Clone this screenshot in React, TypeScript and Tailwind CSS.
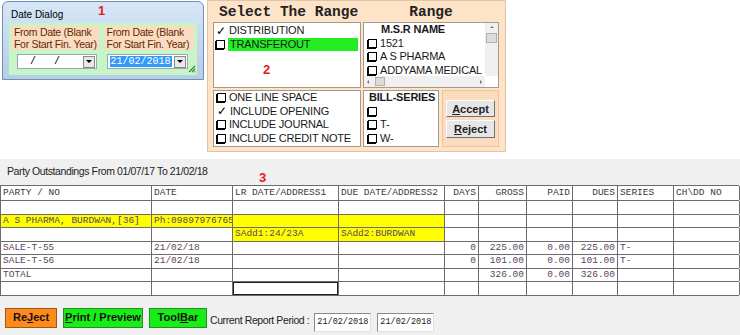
import React from "react";

const cols = ["w-[151px]", "w-[81px]", "w-[106px]", "w-[106px]", "w-[34px]", "w-[48px]", "w-[46px]", "w-[45px]", "w-[56px]", "w-[66px]"];
const right = [false, false, false, false, true, true, true, true, false, false];

const header = ["PARTY / NO", "DATE", "LR DATE/ADDRESS1", "DUE DATE/ADDRESS2", "DAYS", "GROSS", "PAID", "DUES", "SERIES", "CH\\DD NO"];

type Row = { cells: string[]; yellow: number[]; focus?: number };
const rows: Row[] = [
  { cells: ["", "", "", "", "", "", "", "", "", ""], yellow: [] },
  { cells: ["A S PHARMA, BURDWAN,[36]", "Ph:09897976765", "", "", "", "", "", "", "", ""], yellow: [0, 1, 2, 3] },
  { cells: ["", "", "SAdd1:24/23A", "SAdd2:BURDWAN", "", "", "", "", "", ""], yellow: [2, 3] },
  { cells: ["SALE-T-55", "21/02/18", "", "", "0", "225.00", "0.00", "225.00", "T-", ""], yellow: [] },
  { cells: ["SALE-T-56", "21/02/18", "", "", "0", "101.00", "0.00", "101.00", "T-", ""], yellow: [] },
  { cells: ["TOTAL", "", "", "", "", "326.00", "0.00", "326.00", "", ""], yellow: [] },
  { cells: ["", "", "", "", "", "", "", "", "", ""], yellow: [], focus: 2 },
];

function Box({ checked }: { checked?: boolean }) {
  if (checked) return <span className="inline-block w-[10px] text-center text-[12px] leading-[10px] text-black">✓</span>;
  return <span className="inline-block h-[9px] w-[9px] border border-black bg-white shadow-[-1px_1px_0_#000]" />;
}

function Combo({ value, selected }: { value: string; selected?: boolean }) {
  return (
    <div className="flex h-[15px] items-center border border-[#9aa7b5] bg-white">
      <div className="flex-1 pl-[2px] font-['Liberation_Mono',monospace] text-[10px] leading-[12px]">
        {selected ? <span className="bg-[#3399ff] px-[1px] text-white">{value}</span> : <span className="whitespace-pre pl-[10px] text-black">{value}</span>}
      </div>
      <div className="mr-[1px] flex h-[12px] w-[12px] items-center justify-center border border-[#8a8a8a] bg-[#e8e8e8]">
        <span className="block h-0 w-0 border-x-[3px] border-t-[3px] border-x-transparent border-t-black" />
      </div>
    </div>
  );
}

function DateLabel() {
  return (
    <div className="h-[24px] whitespace-nowrap bg-[#fcdcc0] pl-[2px] text-[10.5px] leading-[12px] tracking-[-0.3px] text-[#5c2a0a]">
      From Date (Blank
      <br />
      For Start Fin. Year)
    </div>
  );
}

function DateDialog() {
  return (
    <div className="ml-[2px] mt-[1px] h-[79px] w-[202px] rounded-t-[6px] border border-[#6f8fb5] bg-gradient-to-b from-[#d6e6f6] to-[#b5cde6] px-[6px] font-['Liberation_Sans',sans-serif]">
      <div className="relative h-[21px] pl-[2px] pt-[7px] text-[10px] leading-[12px] text-black">
        Date Dialog
        <span className="absolute left-[89px] top-[3px] text-[13px] font-bold text-[#e02020]">1</span>
      </div>
      <div className="relative flex h-[52px] gap-[6px] bg-[#c8f5c8] px-[3px] pt-[3px]">
        <div className="w-[87px]">
          <DateLabel />
          <div className="ml-[5px] mt-[4px] w-[80px]">
            <Combo value="/   /" />
          </div>
        </div>
        <div className="w-[90px]">
          <DateLabel />
          <div className="ml-[2px] mt-[4px] w-[81px]">
            <Combo value="21/02/2018" selected />
          </div>
        </div>
        <svg className="absolute bottom-[2px] right-[1px]" width="8" height="8" viewBox="0 0 8 8">
          <path d="M7 1L1 7M7 4L4 7M7 6.5L6.5 7" stroke="#2e8b2e" strokeWidth="1.2" />
        </svg>
      </div>
    </div>
  );
}

function RangePanel() {
  return (
    <div className="ml-[3px] h-[152px] w-[299px] border border-[#e2c3a3] bg-[#fde3c8] px-[5px] font-['Liberation_Sans',sans-serif]">
      <div className="flex h-[21px] items-center">
        <div className="w-[150px] pl-[6px] font-['Liberation_Mono',monospace] text-[14.5px] font-bold leading-[16px] text-[#222]">Select The Range</div>
        <div className="w-[136px] text-center font-['Liberation_Mono',monospace] text-[14.5px] font-bold leading-[16px] text-[#222]">Range</div>
      </div>
      <div className="flex gap-[2px]">
        <div className="relative h-[66px] w-[148px] border border-[#a89888] bg-white pt-[1px] text-[11px] leading-[13.5px] tracking-[-0.2px] text-[#1a1a1a]">
          <div className="flex items-center gap-[3px] pl-[2px]"><Box checked /> DISTRIBUTION</div>
          <div className="flex items-center gap-[3px] pl-[2px]"><Box /><span className="mr-[2px] flex-1 bg-[#22ee22] pl-[2px]">TRANSFEROUT</span></div>
          <span className="absolute left-[49px] top-[40px] text-[13px] font-bold text-[#e02020]">2</span>
        </div>
        <div className="relative h-[66px] w-[136px] border border-[#a89888] bg-white text-[11px] leading-[13.5px] tracking-[-0.2px] text-[#1a1a1a]">
          <div className="pl-[17px] font-bold">M.S.R NAME</div>
          <div className="flex items-center gap-[3px] pl-[4px]"><Box /> 1521</div>
          <div className="flex items-center gap-[3px] pl-[4px]"><Box /> A S PHARMA</div>
          <div className="flex items-center gap-[3px] pl-[4px]"><Box /> ADDYAMA MEDICAL</div>
          <div className="absolute right-0 top-0 flex h-[53px] w-[13px] flex-col items-center bg-[#f0f0f0]">
            <span className="mt-[3px] block h-0 w-0 border-x-[2px] border-b-[2px] border-x-transparent border-b-[#777]" />
            <span className="mt-[5px] block h-[10px] w-[11px] border border-[#b0b0b0] bg-[#dcdcdc]" />
          </div>
          <div className="absolute bottom-0 left-0 flex h-[11px] w-[121px] items-center bg-[#f0f0f0]">
            <span className="ml-[3px] block h-0 w-0 border-y-[2px] border-r-[2px] border-y-transparent border-r-[#777]" />
            <span className="ml-[6px] block h-[9px] w-[10px] border border-[#b0b0b0] bg-[#dcdcdc]" />
            <span className="ml-auto mr-[3px] block h-0 w-0 border-y-[2px] border-l-[2px] border-y-transparent border-l-[#777]" />
          </div>
        </div>
      </div>
      <div className="mt-[2px] flex gap-[2px]">
        <div className="h-[57px] w-[148px] border border-[#a89888] bg-white text-[11px] leading-[13.5px] tracking-[-0.2px] text-[#1a1a1a]">
          <div className="flex items-center gap-[3px] pl-[3px]"><Box /> ONE LINE SPACE</div>
          <div className="flex items-center gap-[3px] pl-[3px]"><Box checked /> INCLUDE OPENING</div>
          <div className="flex items-center gap-[3px] pl-[3px]"><Box /> INCLUDE JOURNAL</div>
          <div className="flex items-center gap-[3px] pl-[3px]"><Box /> INCLUDE CREDIT NOTE</div>
        </div>
        <div className="h-[57px] w-[76px] border border-[#a89888] bg-white text-[11px] leading-[13.5px] tracking-[-0.2px] text-[#1a1a1a]">
          <div className="pl-[5px] font-bold">BILL-SERIES</div>
          <div className="flex h-[13.5px] items-center gap-[3px] pl-[4px]"><Box /></div>
          <div className="flex items-center gap-[3px] pl-[4px]"><Box /> T-</div>
          <div className="flex items-center gap-[3px] pl-[4px]"><Box /> W-</div>
        </div>
        <div className="ml-[1px] flex h-[57px] w-[57px] flex-col items-center gap-[3px] border border-[#eac4a0] bg-[#fcdcbf] pt-[9px]">
          <button className="h-[17px] w-[49px] border border-b-[#707070] border-l-white border-r-[#707070] border-t-white bg-[#e6e6e6] text-[11px] font-bold leading-[14px] text-[#222]"><u>A</u>ccept</button>
          <button className="h-[18px] w-[49px] border border-b-[#707070] border-l-white border-r-[#707070] border-t-white bg-[#e6e6e6] text-[11px] font-bold leading-[14px] text-[#222]"><u>R</u>eject</button>
        </div>
      </div>
    </div>
  );
}

function Cell({ i, text, yellow, header, focus }: { i: number; text: string; yellow?: boolean; header?: boolean; focus?: boolean }) {
  return (
    <div
      className={`${cols[i]} shrink-0 overflow-hidden whitespace-nowrap border-r border-[#6c6c6c] px-[2px] ${right[i] ? "text-right" : "text-left"} ${yellow ? "bg-[#ffff00]" : "bg-white"} ${header ? "text-[#3a3a3a]" : "text-[#5a4660]"} ${focus ? "shadow-[inset_0_0_0_1px_#202020]" : ""}`}
    >
      {text}
    </div>
  );
}

const dateBox =
  "h-[19px] w-[57px] border border-b-[#e0e0e0] border-l-[#8a8a8a] border-r-[#e0e0e0] border-t-[#8a8a8a] bg-white pl-[2px] pt-[3px] font-['Liberation_Mono',monospace] text-[8.5px] leading-[11px] text-[#222]";

export default function App() {
  return (
    <div className="h-[335px] w-[740px] overflow-hidden bg-white font-['Liberation_Sans',sans-serif]">
      <div className="flex h-[159px] items-start">
        <DateDialog />
        <RangePanel />
      </div>
      <div className="h-[176px] bg-[#f0f0f0]">
        <div className="relative flex h-[26px] items-center pl-[7px] text-[10.5px] tracking-[-0.4px] text-[#222]">
          Party Outstandings From 01/07/17 To 21/02/18
          <span className="absolute left-[259px] top-[9px] text-[13px] font-bold tracking-normal text-[#e02020]">3</span>
        </div>
        <div className="w-[739px] border-l border-t border-[#6c6c6c] font-['Liberation_Mono',monospace] text-[9.5px]">
          <div className="flex h-[15px] items-center border-b border-[#6c6c6c] leading-[14px]">
            {header.map((h, i) => (
              <Cell key={i} i={i} text={h} header />
            ))}
          </div>
          {rows.map((r, ri) => (
            <div key={ri} className="flex h-[13.5px] border-b border-[#6c6c6c] leading-[12.5px]">
              {r.cells.map((c, i) => (
                <Cell key={i} i={i} text={c} yellow={r.yellow.includes(i)} focus={r.focus === i} />
              ))}
            </div>
          ))}
        </div>
        <div className="mt-[12px] flex items-start pl-[5px]">
          <button className="h-[20px] w-[52px] border border-[#a05a10] bg-[#ff8a1c] text-[11px] font-bold text-[#111]">Re<u>J</u>ect</button>
          <button className="ml-[6px] h-[20px] w-[80px] border border-[#2a8a2a] bg-[#16ee16] text-[11px] font-bold text-[#111]"><u>P</u>rint / Preview</button>
          <button className="ml-[6px] h-[20px] w-[58px] border border-[#2a8a2a] bg-[#16ee16] text-[11px] font-bold text-[#111]">Tool<u>B</u>ar</button>
          <span className="ml-[3px] mt-[6px] text-[10.5px] leading-[13px] tracking-[-0.4px] text-[#222]">Current Report Period :</span>
          <div className={`ml-[5px] mt-[5px] ${dateBox}`}>21/02/2018</div>
          <div className={`ml-[6px] mt-[5px] ${dateBox}`}>21/02/2018</div>
        </div>
      </div>
    </div>
  );
}
